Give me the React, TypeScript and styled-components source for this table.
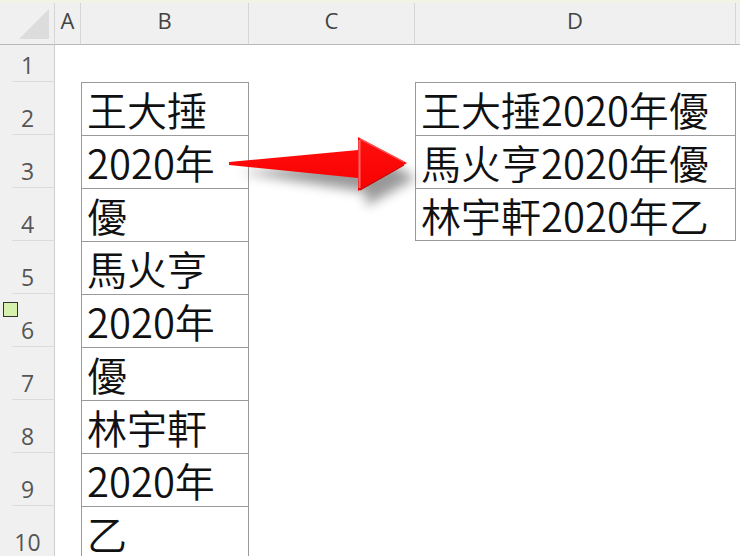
import React from "react";
import styled, { createGlobalStyle } from "styled-components";

const GlobalStyle = createGlobalStyle`
  html, body { margin: 0; padding: 0; background: #ffffff; overflow: hidden; }
  * { box-sizing: border-box; }
`;

const Page = styled.div`
  position: relative;
  width: 740px;
  height: 556px;
  overflow: hidden;
  background: #ffffff;
  display: flex;
  flex-direction: column;
`;

const TopStrip = styled.div`
  height: 3px;
  flex: 0 0 3px;
  background: #f3f2e6;
`;

const Sheet = styled.div`
  display: grid;
  grid-template-columns: 55px 26px 168px 166px 321px 1fr;
  grid-template-rows: 42px 37px repeat(9, 53px);
`;

const Corner = styled.div`
  background: #f0f0f0;
  border-right: 1px solid #d6d6d6;
  border-bottom: 1px solid #b8b8b8;
  display: flex;
  justify-content: flex-end;
  align-items: flex-end;
  padding: 0 5px 5px 0;
`;

const CornerTriangle = styled.div`
  width: 30px;
  height: 30px;
  background: #dcdcdc;
  clip-path: polygon(100% 0, 100% 100%, 0 100%);
`;

const ColHead = styled.div`
  background: #f0f0f0;
  border-right: 1px solid #d6d6d6;
  border-bottom: 1px solid #b8b8b8;
  display: flex;
  align-items: center;
  justify-content: center;
  padding-bottom: 8px;
  font-family: "Open Sans", "Noto Sans", sans-serif;
  font-size: 22px;
  color: #444444;
`;

const RowHead = styled.div`
  position: relative;
  background: #f0f0f0;
  border-right: 1px solid #cfcfcf;
  display: flex;
`;

const RowNum = styled.div`
  flex: 1;
  margin-left: 12px;
  border-bottom: 1px solid #dcdcdc;
  display: flex;
  align-items: flex-end;
  justify-content: center;
  padding: 0 11px 4px 0;
  font-family: "Open Sans", "Noto Sans", sans-serif;
  font-size: 23px;
  line-height: 1;
  color: #555555;
`;

const Marker = styled.div`
  position: absolute;
  left: 3px;
  top: 8px;
  width: 15px;
  height: 15px;
  background: #d6f0ad;
  border: 1px solid #333333;
`;

const Cell = styled.div<{ $boxed?: boolean; $closed?: boolean }>`
  display: flex;
  align-items: center;
  padding: 0 0 0 5px;
  white-space: nowrap;
  font-family: "Noto Sans CJK TC", "Noto Sans", sans-serif;
  font-size: 40px;
  font-weight: 350;
  line-height: 1.1;
  color: #111111;
  border-left: ${(p) => (p.$boxed ? "1px solid #9a9a9a" : "none")};
  border-right: ${(p) => (p.$boxed ? "1px solid #9a9a9a" : "none")};
  border-top: ${(p) => (p.$boxed ? "1px solid #9a9a9a" : "none")};
  border-bottom: ${(p) => (p.$closed ? "1px solid #9a9a9a" : "none")};
`;

const ArrowLayer = styled.svg`
  position: absolute;
  left: 0;
  top: 0;
  width: 740px;
  height: 556px;
  pointer-events: none;
`;

const colB = ["王大捶", "2020年", "優", "馬火亨", "2020年", "優", "林宇軒", "2020年", "乙"];
const colD = ["王大捶2020年優", "馬火亨2020年優", "林宇軒2020年乙"];

function Arrow() {
  return (
    <ArrowLayer viewBox="0 0 740 556">
      <defs>
        <filter id="blur" x="-20%" y="-50%" width="140%" height="200%">
          <feGaussianBlur stdDeviation="6" />
        </filter>
        <linearGradient id="redfill" x1="0" y1="0" x2="0" y2="1">
          <stop offset="0" stopColor="#ff1010" />
          <stop offset="1" stopColor="#f80000" />
        </linearGradient>
      </defs>
      <polygon
        points="240,172 366,162 366,150 416,178 366,206 366,192"
        fill="#000000"
        opacity="0.4"
        filter="url(#blur)"
      />
      <polygon
        points="229,162 358,150 358,137 407,163 358,191 358,178 229,165"
        fill="url(#redfill)"
      />
      <line x1="359.5" y1="140" x2="359.5" y2="188" stroke="#ff6a6a" strokeWidth="2" />
      <line x1="360" y1="139" x2="404" y2="162" stroke="#ff5a5a" strokeWidth="1.2" />
      <line x1="360" y1="190" x2="404" y2="165" stroke="#c80000" strokeWidth="1.2" />
    </ArrowLayer>
  );
}

export default function App() {
  return (
    <Page>
      <GlobalStyle />
      <TopStrip />
      <Sheet>
        <Corner>
          <CornerTriangle />
        </Corner>
        <ColHead>A</ColHead>
        <ColHead>B</ColHead>
        <ColHead>C</ColHead>
        <ColHead>D</ColHead>
        <ColHead />
        {Array.from({ length: 10 }, (_, i) => {
          const row = i + 1;
          const b = row >= 2 ? colB[row - 2] : undefined;
          const d = row >= 2 && row <= 4 ? colD[row - 2] : undefined;
          return (
            <React.Fragment key={row}>
              <RowHead>
                {row === 6 && <Marker />}
                <RowNum>{row}</RowNum>
              </RowHead>
              <Cell />
              <Cell $boxed={b !== undefined}>{b}</Cell>
              <Cell />
              <Cell $boxed={d !== undefined} $closed={row === 4}>
                {d}
              </Cell>
              <Cell />
            </React.Fragment>
          );
        })}
      </Sheet>
      <Arrow />
    </Page>
  );
}
